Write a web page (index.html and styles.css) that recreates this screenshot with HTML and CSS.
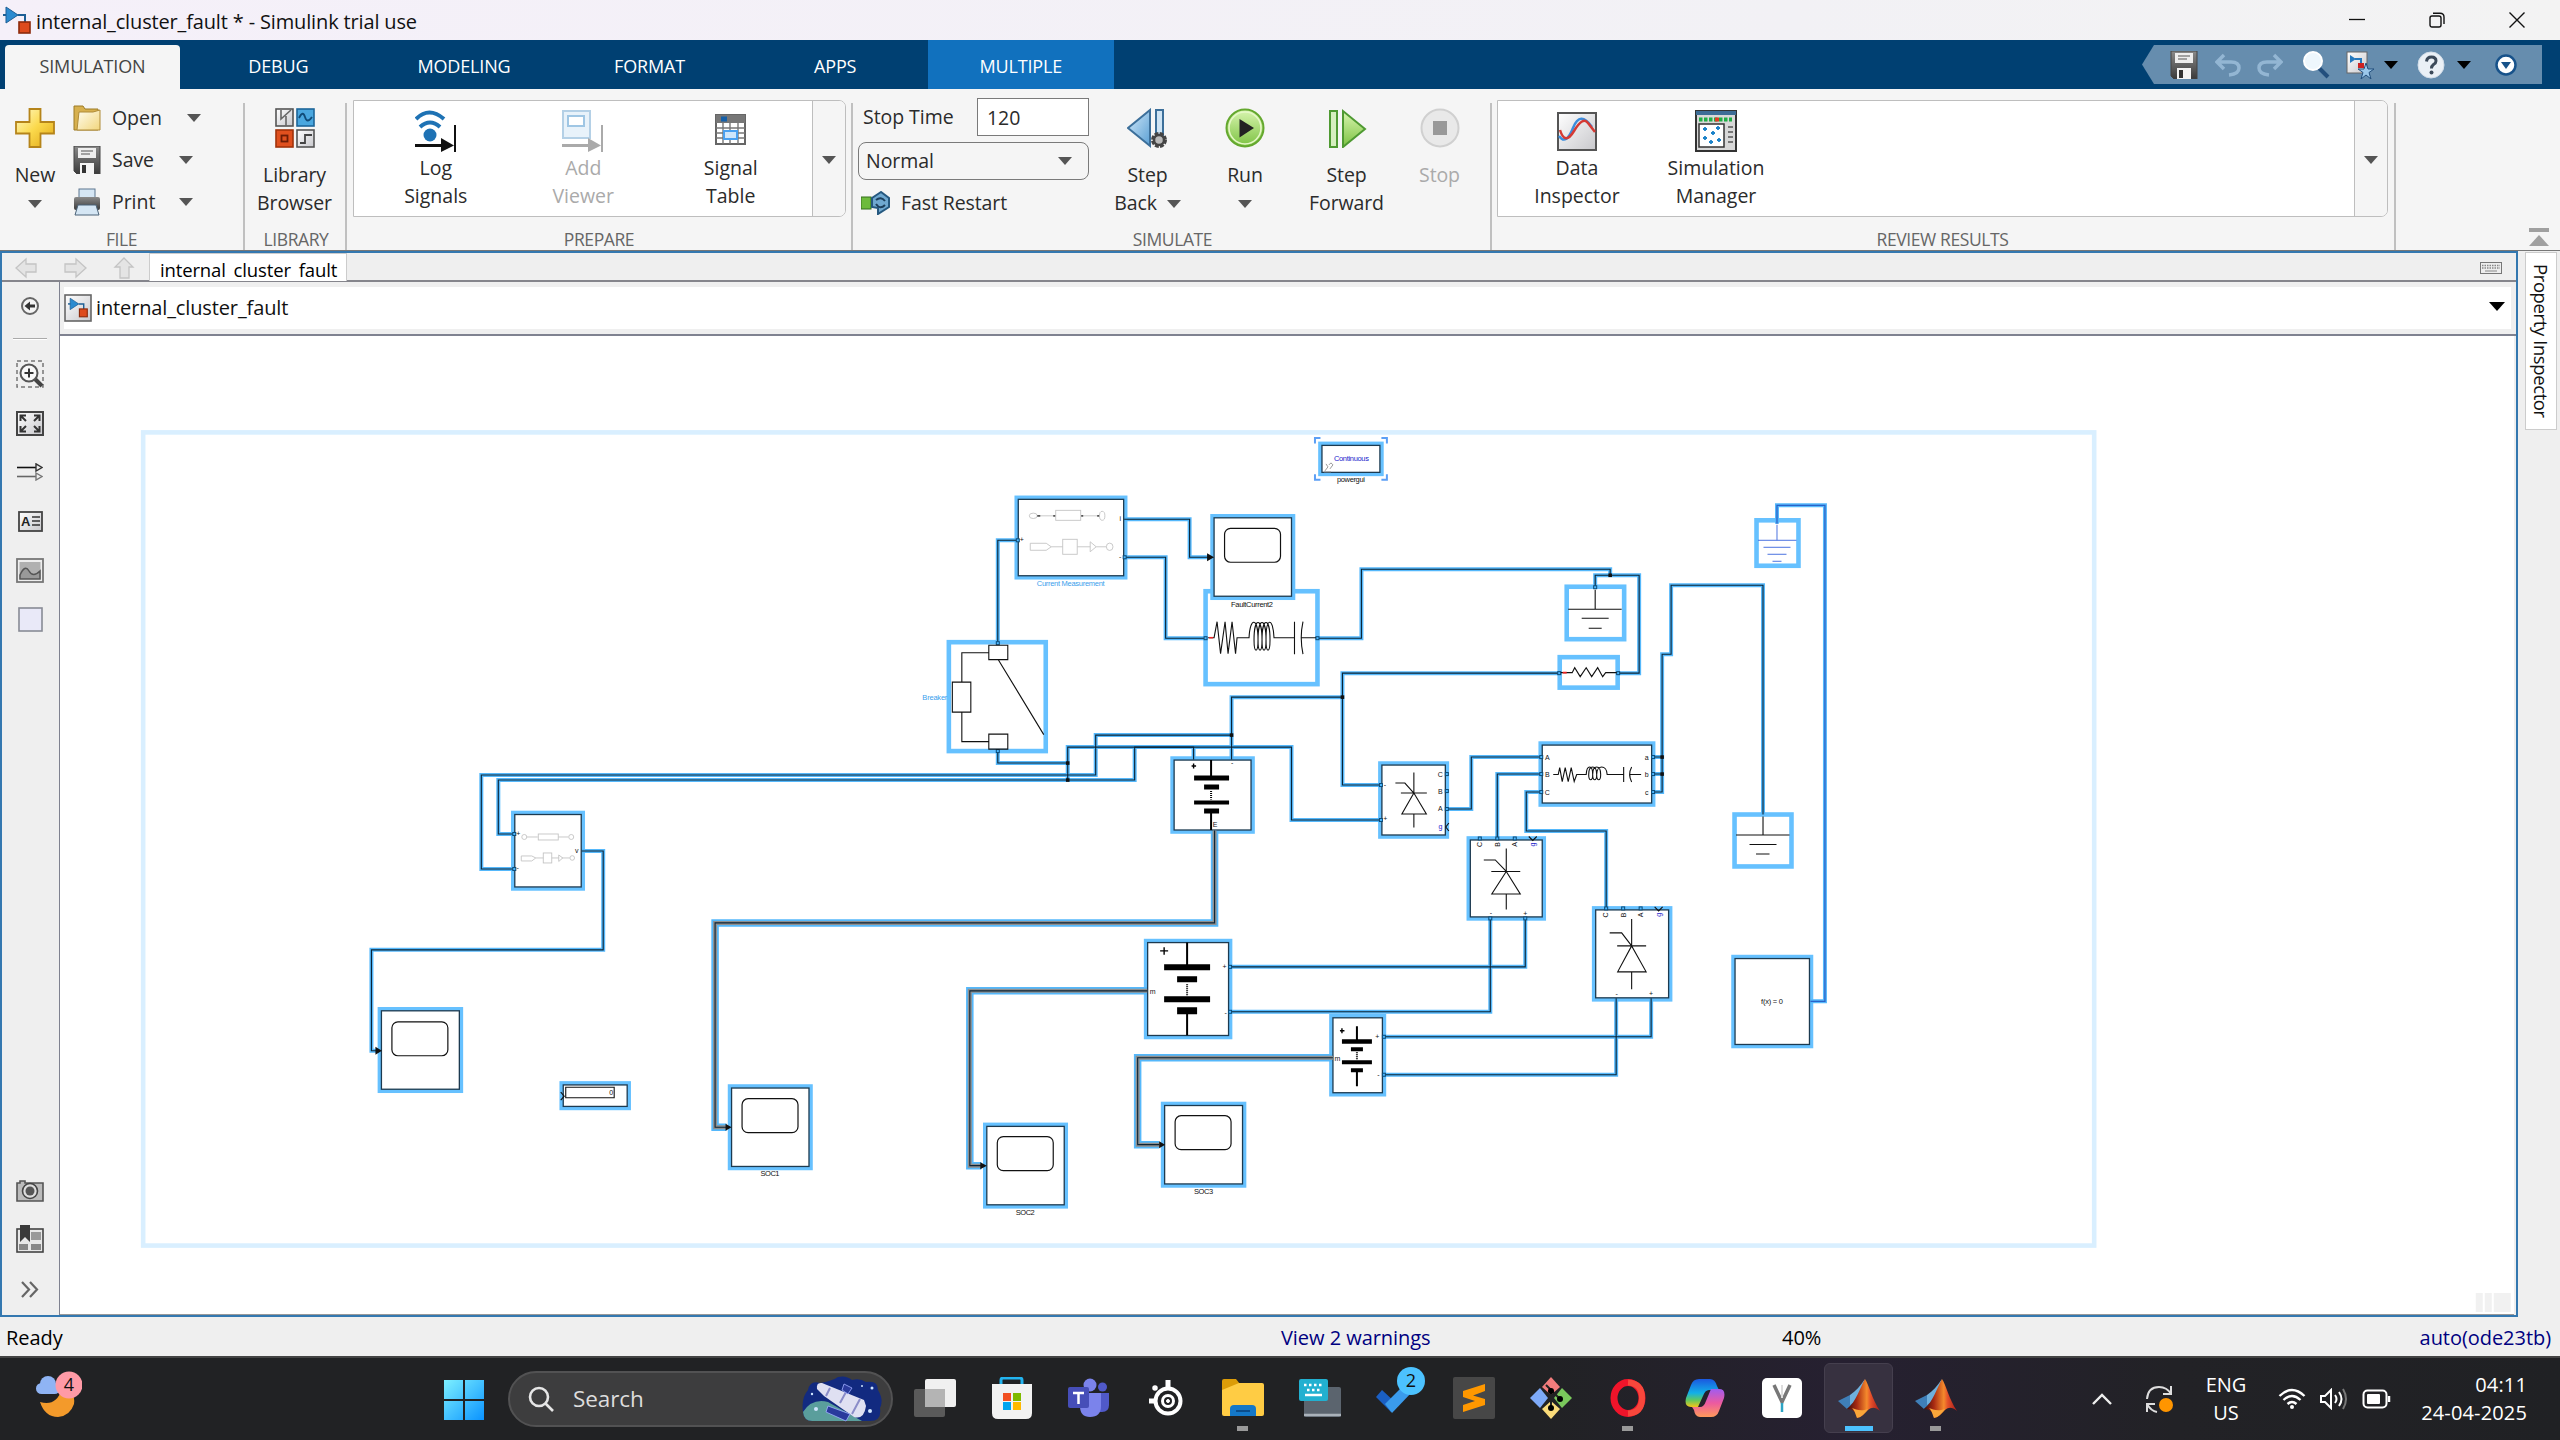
FILE: index.html
```
<!DOCTYPE html>
<html lang="en">
<head>
<meta charset="utf-8">
<title>internal_cluster_fault * - Simulink trial use</title>
<link rel="stylesheet" href="styles.css">
</head>
<body>
<svg class="defs" width="0" height="0">
  <defs>
    <linearGradient id="gold" x1="0" y1="0" x2="1" y2="1"><stop offset="0" stop-color="#fffbd0"/><stop offset=".5" stop-color="#fbd94c"/><stop offset="1" stop-color="#dfa514"/></linearGradient>
    <linearGradient id="manila" x1="0" y1="0" x2="1" y2="1"><stop offset="0" stop-color="#fffdf0"/><stop offset="1" stop-color="#f2d67c"/></linearGradient>
    <linearGradient id="dark" x1="0" y1="0" x2="0" y2="1"><stop offset="0" stop-color="#8a8a8a"/><stop offset="1" stop-color="#3a3a3a"/></linearGradient>
    <linearGradient id="pale" x1="0" y1="0" x2="1" y2="1"><stop offset="0" stop-color="#fff"/><stop offset="1" stop-color="#c8c8cc"/></linearGradient>
    <linearGradient id="sky" x1="0" y1="0" x2="1" y2="1"><stop offset="0" stop-color="#d4eafa"/><stop offset="1" stop-color="#5a9fd4"/></linearGradient>
    <linearGradient id="lime" x1="0" y1="0" x2="0" y2="1"><stop offset="0" stop-color="#d9f5b0"/><stop offset="1" stop-color="#7cc242"/></linearGradient>
    <linearGradient id="win" x1="0" y1="0" x2="1" y2="1"><stop offset="0" stop-color="#7df0ff"/><stop offset="1" stop-color="#0a93ff"/></linearGradient>
    <linearGradient id="flame" x1="0" y1="0" x2="1" y2="0"><stop offset="0" stop-color="#3b0d0a"/><stop offset=".3" stop-color="#a82a12"/><stop offset=".6" stop-color="#f58a2c"/><stop offset=".72" stop-color="#e4502a"/><stop offset="1" stop-color="#a31919"/></linearGradient>
    <linearGradient id="cop1" x1="0" y1="0" x2="0" y2="1"><stop offset="0" stop-color="#1b58e0"/><stop offset=".5" stop-color="#12b0e8"/><stop offset=".75" stop-color="#5fc860"/><stop offset="1" stop-color="#f5c518"/></linearGradient>
    <linearGradient id="cop2" x1="0" y1="0" x2="0" y2="1"><stop offset="0" stop-color="#a05cf0"/><stop offset=".5" stop-color="#ec5aa0"/><stop offset="1" stop-color="#ff9a5a"/></linearGradient>
    <symbol id="floppy" viewBox="0 0 28 28"><path d="M1 0H27V28H4L1 25Z" fill="url(#dark)" stroke="#444"/><rect x="5" y="2" width="18" height="10" fill="#eee"/><path d="M8 5H20M8 8H17" stroke="#888" stroke-width="1.5"/><rect x="7" y="17" width="14" height="11" fill="#f4f4f4"/><rect x="9" y="19" width="4" height="8" fill="#333"/></symbol>
    <symbol id="slk" viewBox="0 0 28 28"><path d="M0 9H14" stroke="#1d5f95" stroke-width="2"/><path d="M3 1L15 9L3 17Z" fill="#2b8bd0" stroke="#1d5f95"/><path d="M15 9H22V17" fill="none" stroke="#1d5f95" stroke-width="2"/><rect x="16" y="16" width="11" height="11" fill="#dd4a1c" stroke="#8d2a0c" stroke-width="1.6"/></symbol>
    <symbol id="matlab" viewBox="0 0 42 40"><path d="M0 23L12 17L20 21L9 31Z" fill="#3f7fb8"/><path d="M12 17C18 13 22 8 27 1L20 21L12 27Z" fill="#6fb0dc"/><path d="M27 1C31 7 34 21 42 33C37 29 34 29 30 32C26 36 24 39 19 40C18 34 15 31 9 31C18 24 22 10 27 1Z" fill="url(#flame)"/><path d="M19 40C17 35 17 33 14 30C18 31 22 34 30 31C26 36 24 39 19 40Z" fill="#f9a63a"/></symbol>
    <symbol id="scope" viewBox="0 0 78 79"><rect x="10.5" y="11" width="56" height="34" rx="6" fill="#fff" stroke="#111" stroke-width="1.2"/></symbol>
  </defs>
</svg>

<header class="titlebar">
  <svg class="app" width="28" height="28"><use href="#slk"/></svg>
  <h1>internal_cluster_fault * - Simulink trial use</h1>
  <div class="winbtns">
    <svg width="16" height="16"><path d="M0 7.5H16" stroke="#111" stroke-width="1.3"/></svg>
    <svg width="16" height="16" fill="none" stroke="#111" stroke-width="1.4"><rect x="1" y="4" width="11" height="11" rx="2"/><path d="M4 1.2H11Q15 1.2 15 5V12"/></svg>
    <svg width="16" height="16"><path d="M.5 .5L15.500 15.500M15.500 .5L.5 15.500" stroke="#111" stroke-width="1.4"/></svg>
  </div>
</header>

<nav class="tabs">
  <span class="tab on">SIMULATION</span><span class="tab">DEBUG</span><span class="tab">MODELING</span><span class="tab">FORMAT</span><span class="tab">APPS</span><span class="tab multi">MULTIPLE</span>
  <div class="quick">
    <svg width="28" height="28"><use href="#floppy"/></svg>
    <svg class="q2" width="26" height="24" fill="none" stroke="#93b6d3" stroke-width="3.500"><path d="M3 9H16Q24 9 24 15Q24 21 14 22M9 2L2 9L9 16"/></svg>
    <svg class="q3" width="26" height="24" fill="none" stroke="#93b6d3" stroke-width="3.500"><path d="M23 9H10Q2 9 2 15Q2 21 12 22M17 2L24 9L17 16"/></svg>
    <svg class="q4" width="28" height="28"><path d="M17 17L26 26" stroke="#234f7d" stroke-width="4"/><circle cx="11" cy="10" r="9" fill="#eef7fd" stroke="#fff" stroke-width="2"/></svg>
    <svg class="q5" width="28" height="28"><rect x="1" y="1" width="20" height="21" fill="url(#pale)" stroke="#666"/><path d="M4 4L10 8L4 12Z" fill="#2478bd"/><path d="M9 8H15V13" stroke="#2478bd" stroke-width="2" fill="none"/><rect x="12" y="12" width="6" height="5" fill="#c22"/><path d="M20 12L22 18H28L23 21.500L25 28L20 24L15 28L17 21.500L12 18H18Z" fill="#9cc8ea" stroke="#234f7d"/></svg>
    <i class="arr blk"></i>
    <svg class="q6" width="28" height="28"><circle cx="14" cy="14" r="13" fill="#eaf0f6" stroke="#d2dde8"/><path d="M9.500 10.500Q10 6 14.500 6Q19 6 19 10Q19 12 16.500 13.500Q14.500 15 14.500 17.500" fill="none" stroke="#3c4a5a" stroke-width="3"/><circle cx="14.500" cy="21.500" r="2" fill="#3c4a5a"/></svg>
    <i class="arr blk"></i>
    <svg class="q7" width="22" height="22"><circle cx="11" cy="11" r="9.500" fill="#fff" stroke="#17528a" stroke-width="2.500"/><path d="M6 8H16L11 15Z" fill="#17528a"/></svg>
  </div>
</nav>

<section class="ribbon">
  <div class="group g-file">
    <div class="body">
      <div class="tool w-new">
        <svg width="40" height="40"><path d="M14.500 1H25.500V14H39V25.500H25.500V39H14.500V25.500H1V14H14.500Z" fill="url(#gold)" stroke="#b5841a" stroke-width="1.8"/></svg>
        <p>New</p><p><i class="arr"></i></p>
      </div>
      <div class="rows">
        <div class="row"><svg width="28" height="26"><path d="M1 1H10L12 4H25V25H1Z" fill="#d7b04e" stroke="#9c7a24"/><path d="M6 7H20L27 5V25H4Z" fill="url(#manila)" stroke="#b08c38"/></svg><span class="wide">Open</span><i class="arr"></i></div>
        <div class="row"><svg width="28" height="28"><use href="#floppy"/></svg><span>Save</span><i class="arr"></i></div>
        <div class="row"><svg width="28" height="28"><rect x="6" y="1" width="16" height="10" fill="#d5e6f4" stroke="#5c7690"/><rect x="1" y="9" width="26" height="13" rx="2" fill="url(#dark)"/><path d="M5 17H23L26 27H2Z" fill="#d5e6f4" stroke="#4b6378"/></svg><span>Print</span><i class="arr"></i></div>
      </div>
    </div>
    <footer>FILE</footer>
  </div>
  <div class="group g-lib">
    <div class="body">
      <div class="tool w-lib">
        <svg width="40" height="40"><rect x="1" y="1" width="17" height="17" fill="url(#pale)" stroke="#555" stroke-width="1.6"/><path d="M6 2V11L16 2M11 18V8" stroke="#666" stroke-width="1.6" fill="none"/><rect x="22" y="1" width="17" height="17" fill="#4aa7df" stroke="#1d6699" stroke-width="1.6"/><path d="M24 10Q28 2 30 9T37 9" stroke="#114b78" stroke-width="1.8" fill="none"/><rect x="1" y="22" width="17" height="17" fill="#e0501e" stroke="#a1320b" stroke-width="1.6"/><rect x="6.500" y="27.500" width="6" height="6" fill="none" stroke="#6d1c05" stroke-width="1.800"/><rect x="22" y="22" width="17" height="17" fill="url(#pale)" stroke="#555" stroke-width="1.6"/><path d="M25 35H30V27H37" stroke="#444" stroke-width="1.8" fill="none"/></svg>
        <p>Library</p><p>Browser</p>
      </div>
    </div>
    <footer>LIBRARY</footer>
  </div>
  <div class="group g-prep">
    <div class="body">
      <div class="gallery gal1">
        <div class="items">
          <div class="item"><svg width="42" height="42"><g fill="none" stroke="#1e72b4" stroke-width="4"><path d="M1 9Q14 -4 29 9"/><path d="M5 17Q15 8 25 17"/></g><circle cx="15" cy="25" r="6.500" fill="#1e72b4"/><path d="M0 35.500H30" stroke="#111" stroke-width="3"/><path d="M26 28L39 35.500L26 42Z" fill="#111"/><path d="M40 15V42" stroke="#111" stroke-width="2"/></svg><p>Log</p><p>Signals</p></div>
          <div class="item off"><svg width="42" height="42"><rect x="1" y="1" width="27" height="27" fill="#e8f2fa" stroke="#b4d0e6" stroke-width="2"/><rect x="6" y="6" width="16" height="10" fill="#fff" stroke="#9fc6e4" stroke-width="2"/><path d="M0 35.500H30" stroke="#aaa" stroke-width="3"/><path d="M26 28L39 35.500L26 42Z" fill="#aaa"/><path d="M40 15V42" stroke="#aaa" stroke-width="2"/></svg><p>Add</p><p>Viewer</p></div>
          <div class="item"><svg width="42" height="42"><rect x="6" y="5" width="29" height="29" fill="#fff" stroke="#666" stroke-width="2"/><rect x="6" y="5" width="29" height="8" fill="#777"/><rect x="11" y="6.500" width="6" height="5" fill="#1660a8"/><path d="M6 18H35M6 23H35M6 28H35M13 13V34M20 13V34M28 13V34" stroke="#777" stroke-width="1.4"/><rect x="14" y="21" width="13" height="8" fill="#cfe6fb" stroke="#4aa0f0" stroke-width="2"/></svg><p>Signal</p><p>Table</p></div>
        </div>
        <div class="more"><i class="arr"></i></div>
      </div>
    </div>
    <footer>PREPARE</footer>
  </div>
  <div class="group g-sim">
    <div class="body">
      <div class="form">
        <div class="stop"><label>Stop Time</label><div class="input">120</div></div>
        <div class="select"><span>Normal</span><i class="arr"></i></div>
        <div class="fast"><svg width="30" height="24"><rect x="0" y="6" width="10" height="12" fill="#6dbb3c" stroke="#356f1c"/><path d="M20 1L11 7V16L17 17V23L28 16V7Z" fill="#6fa8d0" stroke="#25587f" stroke-width="2"/><path d="M15 9Q20 5 24 10M24 14Q19 19 15 13" stroke="#1c3f5c" stroke-width="2" fill="none"/></svg><span>Fast Restart</span></div>
      </div>
      <div class="tool w-back"><svg width="42" height="42"><path d="M23 2V38L1 20Z" fill="url(#sky)" stroke="#3c6f9a" stroke-width="2"/><rect x="29" y="2" width="7" height="26" fill="#cfe4f4" stroke="#3c6f9a" stroke-width="2"/><circle cx="32" cy="32" r="6" fill="#aaa" stroke="#444" stroke-width="4" stroke-dasharray="3.500 1.200"/><circle cx="32" cy="32" r="5" fill="#bbb" stroke="#444" stroke-width="2.500"/></svg><p>Step</p><p>Back <i class="arr"></i></p></div>
      <div class="tool w-run"><svg width="40" height="40"><circle cx="20" cy="20" r="18.500" fill="url(#lime)" stroke="#64a82e" stroke-width="2"/><circle cx="20" cy="20" r="16" fill="none" stroke="#e6f8c8" stroke-width="1.500"/><path d="M14.500 11L29 20L14.500 29.500Z" fill="#222"/></svg><p>Run</p><p><i class="arr"></i></p></div>
      <div class="tool w-fwd"><svg width="40" height="40"><rect x="3" y="3" width="7" height="36" fill="#d6efbf" stroke="#4f9a32" stroke-width="2"/><path d="M16 3V39L38 21Z" fill="url(#lime)" stroke="#4f9a32" stroke-width="2"/></svg><p>Step</p><p>Forward</p></div>
      <div class="tool w-stop off"><svg width="40" height="40"><circle cx="20" cy="20" r="18.500" fill="#e9e9e9" stroke="#d0d0d0" stroke-width="2"/><rect x="13" y="13" width="14" height="14" fill="#999"/></svg><p>Stop</p></div>
    </div>
    <footer>SIMULATE</footer>
  </div>
  <div class="group g-rev">
    <div class="body">
      <div class="gallery gal2">
        <div class="items">
          <div class="item"><svg width="42" height="42"><rect x="2" y="3" width="38" height="37" fill="url(#pale)" stroke="#555" stroke-width="2"/><path d="M3 26Q10 36 17 18T36 17" fill="none" stroke="#3c8ddc" stroke-width="2.500"/><path d="M4 20Q9 36 18 21T32 13L39 22" fill="none" stroke="#d43a34" stroke-width="2.500"/></svg><p>Data</p><p>Inspector</p></div>
          <div class="item"><svg width="42" height="42"><rect x="1" y="1" width="40" height="40" fill="#d8d8d8" stroke="#333" stroke-width="2"/><rect x="1" y="1" width="40" height="4" fill="#3d6d96"/><path d="M4 9.500H37" stroke="#1fae45" stroke-width="4" stroke-dasharray="3.500 1.500"/><rect x="20" y="7.500" width="4" height="4" fill="#e23b25"/><rect x="4" y="14" width="25" height="23" fill="#fff" stroke="#333" stroke-width="1.500"/><path d="M8 19H12M10 17V21M16 23H20M18 21V25M21 18H25M23 16V20M8 28H12M10 26V30M14 32H18M16 30V34M22 30H26M24 28V32" stroke="#1b82c9" stroke-width="1.800"/><path d="M33 17H38M33 22H38M33 27H38M33 32H38" stroke="#555" stroke-width="1.600"/></svg><p>Simulation</p><p>Manager</p></div>
        </div>
        <div class="more"><i class="arr"></i></div>
      </div>
    </div>
    <footer>REVIEW RESULTS</footer>
  </div>
  <svg class="collapse" width="20" height="20"><rect width="20" height="4" x="0" y="1" fill="#a0a0a0"/><path d="M10 8L20 19H0Z" fill="#a0a0a0"/></svg>
</section>

<main class="work">
  <div class="editor">
    <div class="docbar">
      <svg class="nav" width="147" height="26" fill="#e4e4e4" stroke="#c4c4c4" stroke-width="1.300"><path d="M14 15L24 6V11H34V19H24V24Z"/><path d="M84 15L74 6V11H63V19H74V24Z"/><path d="M122 5L131 14H127V25H118V14H113Z"/></svg>
      <div class="doctab"><span>internal_cluster_fault</span></div>
      <svg class="kbd" width="22" height="12"><rect x=".5" y=".5" width="21" height="11" fill="#eee" stroke="#777"/><path d="M2 3.500H20M2 6H20" stroke="#888" stroke-width="1.300" stroke-dasharray="1.500 1"/><path d="M5 9H17" stroke="#888"/></svg>
    </div>
    <div class="panes">
      <aside class="strip">
        <div class="icons">
          <svg width="18" height="18"><circle cx="9" cy="9" r="8" fill="#f4f4f4" stroke="#666" stroke-width="2"/><path d="M3.500 9L9 4.500V7.500H14V10.500H9V13.500Z" fill="#333"/></svg>
          <hr>
          <svg class="i1" width="28" height="28"><rect x="1" y="1" width="26" height="26" fill="none" stroke="#777" stroke-width="1.500" stroke-dasharray="4 3"/><path d="M18 18L26 26" stroke="#444" stroke-width="4"/><circle cx="13" cy="13" r="8.500" fill="#f8f8f8" stroke="#555" stroke-width="2"/><path d="M8.500 13H17.500M13 8.500V17.500" stroke="#333" stroke-width="2"/></svg>
          <svg class="i2" width="28" height="25"><rect x="1" y="1" width="26" height="23" fill="url(#pale)" stroke="#444" stroke-width="2"/><path d="M4.500 10V4.500H10M4.500 4.500L10 10M23.500 10V4.500H18M23.500 4.500L18 10M4.500 15V20.500H10M4.500 20.500L10 15M23.500 15V20.500H18M23.500 20.500L18 15" fill="none" stroke="#333" stroke-width="2"/></svg>
          <svg class="i3" width="26" height="18"><path d="M0 4.500H22" stroke="#111" stroke-width="1.600"/><path d="M0 13.500H22" stroke="#666" stroke-width="1.600"/><path d="M19 .8L25 4.500L19 8Z" fill="#eee" stroke="#333" stroke-width="1.400"/><path d="M19 10L25 13.500L19 17Z" fill="#eee" stroke="#777" stroke-width="1.400"/></svg>
          <svg class="i4" width="25" height="21"><rect x="1" y="1" width="23" height="19" fill="url(#pale)" stroke="#444" stroke-width="1.800"/><text x="3" y="14.500" class="ico-a">A</text><path d="M14 6H22M14 10H22M14 14H22" stroke="#333" stroke-width="1.300"/></svg>
          <svg class="i5" width="28" height="25"><rect x="1" y="1" width="26" height="23" fill="#eee" stroke="#777" stroke-width="1.800"/><rect x="3.500" y="4" width="21" height="17" fill="#b0b0b0"/><path d="M4 17Q9 6 13 13T24 13V21H4Z" fill="#999" stroke="#555" stroke-width="1.500"/></svg>
          <svg class="i6" width="25" height="25"><rect x="1" y="1" width="23" height="23" fill="#e9e9f8" stroke="#888b95" stroke-width="1.600"/></svg>
          <svg class="i7" width="28" height="23"><path d="M1 4H4V2H9V4H27V22H1Z" fill="#bbb" stroke="#555" stroke-width="1.600"/><circle cx="14" cy="12" r="7.500" fill="#ddd" stroke="#444" stroke-width="1.600"/><circle cx="14" cy="12" r="4.500" fill="#555"/></svg>
          <svg class="i8" width="28" height="28"><rect x="1" y="4" width="26" height="23" fill="#e8e8e8" stroke="#444" stroke-width="1.600"/><rect x="3" y="19" width="9" height="6" fill="#888"/><rect x="15" y="19" width="10" height="6" fill="#888"/><rect x="15" y="7" width="10" height="8" fill="#999"/><path d="M4 0H14V17L9 12L4 17Z" fill="#3a3a3a"/></svg>
          <svg class="i9" width="18" height="17" fill="none" stroke="#666" stroke-width="2.200"><path d="M1 1L8 8.500L1 16M9 1L16 8.500L9 16"/></svg>
        </div>
      </aside>
      <div class="content">
        <div class="crumb">
          <div class="path"><svg width="28" height="28"><rect x="1" y="1" width="26" height="26" fill="url(#pale)" stroke="#666" stroke-width="1.600"/><svg x="4" y="3" width="20" height="21"><use href="#slk"/></svg></svg><span>internal_cluster_fault</span><i class="arr big blk"></i></div>
        </div>
        <svg class="canvas" width="2454" height="979" viewBox="60 336 2454 979">
          <defs>
            <g id="blocks">
              <rect x="1322" y="445.500" width="58" height="27"/>
              <rect x="1018" y="499.500" width="105.500" height="76.500"/>
              <rect x="1214" y="518" width="77.500" height="78.500"/>
              <rect x="1174" y="760.500" width="77" height="70"/>
              <rect x="1382" y="765.500" width="63.500" height="70"/>
              <rect x="1147.500" y="943.200" width="81" height="93"/>
              <rect x="1333" y="1018.500" width="49.500" height="75"/>
              <rect x="1164.500" y="1106.300" width="78" height="78.500"/>
              <rect x="380.500" y="1011.500" width="78" height="78.500"/>
              <rect x="731" y="1088.800" width="77.500" height="78.500"/>
              <rect x="986.500" y="1127.200" width="77.500" height="78.500"/>
              <rect x="562.500" y="1085.700" width="64" height="21.500"/>
              <rect x="514" y="815" width="66.500" height="72.500"/>
              <rect x="1470.500" y="840.500" width="72" height="77"/>
              <rect x="1596" y="910.500" width="73" height="88"/>
              <rect x="1542.500" y="745.500" width="109.500" height="58"/>
              <rect x="1735.500" y="959.200" width="74.500" height="86"/>
            </g>
            <g id="wires">
              <path d="M1017 540.500H997.500V642"/>
              <path d="M1124 519.500H1189.500V557.500H1208"/>
              <path d="M1124 557.500H1165.500V638.500H1205"/>
              <path d="M1317.500 638.500H1361.500V569.500H1610.500V575.500"/>
              <path d="M1595.500 588V575.500H1639.500V673.500H1618"/>
              <path d="M1559 673.500H1342.500V785.500H1381"/>
              <path d="M1342.500 697.500H1231.500V760"/>
              <path d="M1231.500 735.500H1095.500V775.500H480.500V869.500H514"/>
              <path d="M997.500 751V763.500H1067.500"/>
              <path d="M1067.500 780.500V747.500H1291.500V820.500H1381"/>
              <path d="M514 834.500H497.500V780.500H1134.500V747.500H1193.500V760"/>
              <path d="M581 851.500H602.500V950.500H370.500V1051.500H376"/>
              <path d="M1446 809.500H1471.500V757.500H1542"/>
              <path d="M1497.500 840V774.500H1542"/>
              <path d="M1542 792.500H1526.500V831.500H1606.500V910"/>
              <path d="M1652 792.500H1662.500V654.500H1671.500V585.500H1763.500V815"/>
              <path d="M1652 757.500H1662.500M1652 774.500H1662.500"/>
              <path d="M1229 967.500H1525.500V918"/>
              <path d="M1229 1012.500H1490.500V918"/>
              <path d="M1383 1037.500H1651.500V999"/>
              <path d="M1383 1075.500H1616.500V999"/>
            </g>
            <g id="busses">
              <path d="M1214.500 831V923.500H714.500V1128H726"/>
              <path d="M1147 991.500H969.500V1166.500H981"/>
              <path d="M1333 1058.500H1137.500V1145.500H1159"/>
            </g>
            <path id="sheet-gnd" d="M1777.500 524V505.500H1825.500V1002H1811"/>
          </defs>
          <rect x="142" y="432.500" width="1953" height="814" fill="none" stroke="#d9efff" stroke-width="4.600"/>
          <g class="selbox">
            <rect x="1205.500" y="591.500" width="112" height="93"/>
            <rect x="948.500" y="642.500" width="97" height="109"/>
            <rect x="1567" y="587" width="57.500" height="52.500"/>
            <rect x="1560" y="657.500" width="58" height="30.500"/>
            <rect x="1735" y="815" width="57" height="52"/>
            <rect x="1757" y="520.500" width="42" height="45.500"/>
          </g>
          <use href="#blocks" class="halo-block"/>
          <use href="#wires" class="halo-wire"/>
          <use href="#sheet-gnd" class="halo-wire"/>
          <use href="#busses" class="halo-bus"/>
          <use href="#blocks" class="core-block"/>
          <use href="#wires" class="core-wire"/>
          <use href="#sheet-gnd" class="core-phys"/>
          <use href="#busses" class="grey-bus"/>
          <use href="#busses" class="core-wire"/>

          <g fill="#111">
            <path d="M1207 553.500L1214 557.500L1207 561.500Z"/><path d="M374.500 1047.500L381 1051.500L374.500 1055.500Z"/><path d="M725 1124.500L731 1128L725 1131.500Z"/><path d="M980 1163L986.500 1166.500L980 1170Z"/><path d="M1159 1142L1165 1145.500L1159 1149Z"/>
            <rect x="1608.700" y="573.700" width="3.600" height="3.600"/><rect x="1340.700" y="695.700" width="3.600" height="3.600"/><rect x="1229.700" y="733.700" width="3.600" height="3.600"/><rect x="1065.700" y="761.700" width="3.600" height="3.600"/><rect x="1065.700" y="778.700" width="3.600" height="3.600"/><rect x="1660.700" y="755.700" width="3.600" height="3.600"/><rect x="1660.700" y="772.700" width="3.600" height="3.600"/>
          </g>
          <g fill="#4db8ff" stroke="#0a4b78" stroke-width="1">
            <rect x="1016" y="539" width="3" height="3"/><rect x="1123" y="556" width="3" height="3"/><rect x="1204" y="637" width="3" height="3"/><rect x="1316" y="637" width="3" height="3"/><rect x="996" y="642" width="3" height="3"/><rect x="996" y="750" width="3" height="3"/><rect x="1558" y="672" width="3" height="3"/><rect x="1617" y="672" width="3" height="3"/><rect x="1594" y="586" width="3" height="3"/>
            <rect x="1379.500" y="784" width="3" height="3"/><rect x="1379.500" y="819" width="3" height="3"/><rect x="1445.500" y="773" width="3" height="3"/><rect x="1445.500" y="790" width="3" height="3"/><rect x="1445.500" y="808" width="3" height="3"/>
            <rect x="1478.500" y="837.500" width="3" height="3"/><rect x="1496" y="837.500" width="3" height="3"/><rect x="1513.500" y="837.500" width="3" height="3"/><rect x="1605" y="907.500" width="3" height="3"/><rect x="1622" y="907.500" width="3" height="3"/><rect x="1639.500" y="907.500" width="3" height="3"/>
            <rect x="1540" y="756" width="3" height="3"/><rect x="1540" y="773" width="3" height="3"/><rect x="1540" y="791" width="3" height="3"/><rect x="1652" y="756" width="3" height="3"/><rect x="1652" y="773" width="3" height="3"/><rect x="1652" y="791" width="3" height="3"/>
            <rect x="1228.500" y="966" width="3" height="3"/><rect x="1228.500" y="1011" width="3" height="3"/><rect x="1382.500" y="1036" width="3" height="3"/><rect x="1382.500" y="1074" width="3" height="3"/><rect x="1489" y="917.500" width="3" height="3"/><rect x="1524" y="917.500" width="3" height="3"/><rect x="512" y="833" width="3" height="3"/><rect x="512" y="868" width="3" height="3"/>
          </g>

          <use href="#scope" x="1214" y="517.500" width="78" height="79"/>
          <use href="#scope" x="1164.500" y="1105.500" width="78" height="79"/>
          <use href="#scope" x="380.500" y="1011.500" width="78" height="79"/>
          <use href="#scope" x="731" y="1088.500" width="78" height="79"/>
          <use href="#scope" x="986.500" y="1126.500" width="78" height="79"/>
          <path d="M565 1088H613.500V1098.500H565ZM560 1093L563.500 1097L560 1101" class="ln"/>

          <!-- powergui selection brackets and broken-link badge -->
          <path d="M1315 443.500V438H1320.500M1381.500 438H1387V443.500M1387 474.500V480H1381.500M1320.500 480H1315V474.500" fill="none" stroke="#5c9ff5" stroke-width="2"/>
          <path d="M1325 471L1328 467L1326 464M1329 465L1331 463L1333 465L1330 469M1324 472L1331 472" fill="none" stroke="#999" stroke-width="1"/>

          <!-- current and voltage measurement masks -->
          <g class="faint">
            <ellipse cx="1033" cy="516" rx="4" ry="2.700"/><path d="M1037 516H1055M1081 516H1098"/><rect x="1055.500" y="510.500" width="25" height="10"/><ellipse cx="1102" cy="516" rx="2.700" ry="4.500"/>
            <path d="M1030 543.500H1046L1051 547L1046 550.500H1030ZM1051 547H1062.500M1077 547H1090M1096 547H1106M1090 542L1096 547L1090 552Z"/><rect x="1062.500" y="539.500" width="14.500" height="15"/><ellipse cx="1109.500" cy="547" rx="3.300" ry="3.700"/>
            <circle cx="523.500" cy="837.500" r="2.500"/><path d="M526 837.500H537M557.500 837.500H567.500"/><rect x="537.500" y="834.500" width="20" height="6"/><circle cx="570.500" cy="837.500" r="2.500"/>
            <path d="M520.500 856.500H531L535 858.500L531 861.500H520.500ZM535 858.500H542.500M551 858.500H558M561 858.500H569M558 855.500L562 858.500L558 862Z"/><rect x="542.500" y="853.500" width="8.500" height="10"/><circle cx="571.500" cy="858.500" r="2.300"/>
          </g>
          <path d="M1037 516H1040M1053 516H1055M1081 516H1083M1097 516H1099" stroke="#555" stroke-width="1.800"/>

          <!-- series RLC branch -->
          <path class="ln" d="M1208 638H1214L1217 622L1220.500 654L1225 622L1228 654L1232 622L1235.500 654L1237 638H1249C1250 617 1258 617 1258 640C1258 654 1254 654 1254 640C1254 617 1262 617 1262 640C1262 654 1258 654 1258 640C1258 617 1266 617 1266 640C1266 654 1262 654 1262 640C1262 617 1270 617 1270 640C1270 654 1266 654 1266 640C1266 617 1273 617 1274 638H1294.500M1294.500 622V654.500M1303 622Q1299.500 638 1303 654.500M1301 638H1316"/>
          <path d="M1209 638H1213" stroke="#e22" stroke-width="1.500"/>

          <!-- breaker -->
          <path class="ln" d="M988.500 645.500H1007.500V660H988.500ZM988.500 734.500H1007.500V749.500H988.500ZM952 682.500H970.500V712.500H952ZM988.500 653H961.500V682.500M961.500 712.500V742H988.500M998 660L1043.500 735"/>

          <!-- resistor -->
          <path class="ln" d="M1561 673H1572.500L1575 668L1580.500 677L1586.500 668L1592 677L1598 668L1603 677L1606 673H1617"/>
          <path d="M1563 673H1567" stroke="#e22" stroke-width="1.800"/>

          <!-- grounds -->
          <path class="ln" d="M1595.500 590V609.500M1568.500 609.500H1622M1582 618.500H1609M1589 628.500H1602M1763.500 817V835.500M1736.500 835.500H1790M1750 845H1777M1756.500 854.500H1770"/>
          <path d="M1777.500 525V540.500M1758.500 540.500H1797M1764 547.500H1791M1768 554.500H1787M1773 561.500H1782" fill="none" stroke="#4a72e0" stroke-width="1"/>

          <!-- three-phase RLC -->
          <path class="ln" d="M1553.500 775H1558.500L1560 768L1562.500 782L1565.500 768L1568.500 782L1571.500 768L1574.500 782L1577 775H1586.500C1587 765 1593 765 1593 775C1593 782 1589 782 1589 775C1589 765 1597 765 1597 775C1597 782 1593 782 1593 775C1593 765 1601 765 1601 775C1601 782 1597 782 1597 775C1597 765 1607 765 1607.500 775H1624M1624 767.500V782.500M1632 767.500Q1628 775 1632 782.500M1630 775H1641.500"/>

          <!-- thyristors -->
          <g class="ln">
            <path d="M1414 773V793.500M1401 793.500H1427M1414 793.500L1402 814.500H1426.500ZM1414 814.500V828M1395.500 783.500H1405L1414 793.500"/>
            <path d="M1506.500 849V872M1491.500 872H1520.500M1506.500 872L1492 894.500H1520.500ZM1506.500 894.500V910M1484 860.500H1495.500L1506.500 872"/>
            <path d="M1632 919.500V946.500M1617.500 946.500H1646.500M1632 946.500L1618 972.500H1646.500ZM1632 972.500V990M1610 933.500H1622L1632 946.500"/>
            <path d="M1449 823.500L1446 827.500L1449 831.500M1529 837L1533 841L1537 837M1655 907.500L1659 911.500L1663 907.500"/>
          </g>

          <!-- batteries -->
          <path fill="#000" d="M1210 760.500H1212V776H1229V781H1194V776H1210ZM1204 785H1219V790H1204ZM1194 801H1229V805H1194ZM1204 809H1219V814H1212V830.500H1210V814H1204Z"/>
          <path fill="#000" d="M1186 943H1188V965H1210V971H1164V965H1186ZM1177 977H1197V983H1177ZM1164 997H1210V1003H1164ZM1177 1008H1197V1015H1188V1036H1186V1015H1177Z"/>
          <path fill="#000" d="M1356 1027H1358V1040H1372V1044.500H1342V1040H1356ZM1351 1048H1363V1052H1351ZM1342 1061H1372V1065H1342ZM1351 1069H1363V1073H1358V1087H1356V1073H1351Z"/>
          <path d="M1211 791.500V800M1187 985V996M1357 1053V1060" stroke="#000" stroke-width="2" stroke-dasharray="1 1"/>
          <path d="M1191.500 766.500H1196M1193.500 764V769M1160 951.500H1168M1164 948V955.500M1340 1031.500H1344.500M1342 1029V1034" stroke="#000" stroke-width="1.400"/>

          <g class="lbl">
            <text x="1351.500" y="461.500" class="navy" textLength="35">Continuous</text><text x="1351" y="482.500" textLength="28">powergui</text>
            <text x="1070.500" y="586" class="sky" textLength="68">Current Measurement</text><text x="1252" y="607" textLength="42">FaultCurrent2</text>
            <text x="934.500" y="700.500" class="sky" textLength="25">Breaker</text>
            <text x="1203.500" y="1194.500" textLength="19">SOC3</text><text x="769.500" y="1177" textLength="19">SOC1</text><text x="1025" y="1216" textLength="19">SOC2</text>
            <text x="1772.500" y="1004.500" textLength="22">f(x) = 0</text>
          </g>
          <g class="port">
            <text x="1120" y="521.500">i</text><text x="1120" y="559.500">-</text><text x="1021.500" y="542">+</text>
            <text x="610.500" y="1096">0</text><text x="517.500" y="836.500">+</text><text x="517" y="871">-</text><text x="576" y="854">v</text>
            <text x="1232" y="765">-</text><text x="1215" y="828">E</text>
            <text x="1440.500" y="777">C</text><text x="1440.500" y="794">B</text><text x="1440.500" y="812">A</text><text x="1440.500" y="829.500" class="navy">g</text>
            <text x="1385" y="787.500">-</text><text x="1385.500" y="822">+</text>
            <text x="1152.500" y="994.500">m</text><text x="1224.500" y="969.500">+</text><text x="1225.500" y="1015.500">-</text>
            <text x="1337.500" y="1061.500">m</text><text x="1377.500" y="1040">+</text><text x="1378.500" y="1078">-</text>
            <text x="1547.500" y="760">A</text><text x="1547.500" y="777">B</text><text x="1547.500" y="795">C</text>
            <text x="1647" y="760">a</text><text x="1647" y="777">b</text><text x="1647" y="795">c</text>
            <text transform="translate(1482.500 845) rotate(-90)">C</text><text transform="translate(1500 845) rotate(-90)">B</text><text transform="translate(1517.500 845) rotate(-90)">A</text><text transform="translate(1535 845) rotate(-90)" class="navy">g</text>
            <text transform="translate(1608.500 915.500) rotate(-90)">C</text><text transform="translate(1626 915.500) rotate(-90)">B</text><text transform="translate(1643.500 915.500) rotate(-90)">A</text><text transform="translate(1661 915.500) rotate(-90)" class="navy">g</text>
            <text x="1491" y="916">-</text><text x="1525.500" y="916.500">+</text><text x="1617" y="997">-</text><text x="1651.500" y="997">+</text>
          </g>
          <g fill="#f1f1f1"><rect x="2477" y="1294" width="7" height="19"/><rect x="2486" y="1294" width="7" height="19"/><rect x="2495" y="1294" width="17" height="19"/></g>
        </svg>
      </div>
    </div>
  </div>
  <aside class="inspector"><span>Property Inspector</span></aside>
</main>

<div class="status"><span>Ready</span><a class="warn">View 2 warnings</a><span class="zoom">40%</span><a class="solver">auto(ode23tb)</a></div>

<footer class="taskbar">
  <svg class="weather" width="48" height="48"><g fill="#8fb4f4"><circle cx="14" cy="13" r="8"/><rect x="2" y="12" width="24" height="11" rx="5.500"/></g><path d="M6 31Q22 36 28 18Q42 20 40 33Q36 45 24 46Q11 46 6 31Z" fill="#f39a2b"/><circle cx="35" cy="14" r="13.500" fill="#ff9aa6"/><text x="35" y="20">4</text></svg>
  <svg class="start" width="40" height="41"><path d="M0 1H19V20H0ZM21 1H40V20H21ZM0 22H19V41H0ZM21 22H40V41H21Z" fill="url(#win)"/></svg>
  <div class="search"><svg width="26" height="26" fill="none" stroke="#e6e6e6" stroke-width="2.600"><circle cx="11" cy="11" r="9"/><path d="M17.500 17.500L25 25"/></svg><span>Search</span>
    <svg class="art" width="80" height="46" viewBox="0 0 80 46"><path d="M1 36Q-1 22 6 14Q8 4 18 7Q30 5 36 1Q44 -1 50 4Q58 2 64 6Q76 4 76 14Q82 24 78 32Q80 45 68 45H12Q2 46 1 36Z" fill="#122a80"/><path d="M1 36Q10 22 26 26L60 45H12Q2 46 1 36Z" fill="#5a9e9c"/><path d="M20 7Q14 6 15 13L22 20L52 41Q62 44 64 30L62 24Z" fill="#dfe0f2"/><path d="M28 12L24 20M44 16L38 27M58 23L50 38" stroke="#8a8cc8" stroke-width="2"/><path d="M26 30L48 38L44 45L24 36ZM42 8L50 12L46 18L40 14Z" fill="#2a3a9c" stroke="#9fb0ff" stroke-width=".8"/><g fill="#cfe6ff"><circle cx="10" cy="18" r="1.200"/><circle cx="70" cy="12" r="1.500"/><circle cx="68" cy="35" r="2"/><circle cx="14" cy="33" r="2"/><circle cx="60" cy="10" r="1"/></g></svg>
  </div>
  <div class="apps">
    <div class="cell"><svg width="42" height="40"><rect x="0" y="11" width="31" height="28" rx="2" fill="#5a5a5a"/><rect x="11" y="1" width="31" height="28" rx="2" fill="#f0f0f0"/><rect x="11" y="11" width="20" height="18" fill="#b4b4b4"/></svg></div>
    <div class="cell"><svg width="42" height="42"><path d="M10 10V3Q10 1 12 1H29Q31 1 31 3V10" fill="none" stroke="#22b4f0" stroke-width="3"/><path d="M1 7H41V36Q41 42 35 42H7Q1 42 1 36Z" fill="#f2f2f2"/><rect x="12" y="16" width="8" height="8" fill="#f25022"/><rect x="22" y="16" width="8" height="8" fill="#7fba00"/><rect x="12" y="25" width="8" height="8" fill="#00a4ef"/><rect x="22" y="25" width="8" height="8" fill="#ffb900"/></svg></div>
    <div class="cell"><svg width="42" height="40"><circle cx="22" cy="7" r="6.500" fill="#7b83eb"/><circle cx="34.500" cy="9" r="4.500" fill="#5059c9"/><path d="M28 15H41V27Q41 34 34 34H28Z" fill="#5059c9"/><path d="M12 15H33V28Q33 39 22 39Q12 39 12 28Z" fill="#7b83eb"/><rect x="0" y="9" width="21" height="21" rx="2" fill="#464eb8"/><path d="M5 15H16M10.500 15V26" stroke="#fff" stroke-width="2.500"/></svg></div>
    <div class="cell"><svg width="36" height="38" fill="none" stroke="#fff"><circle cx="20" cy="22" r="12.500" stroke-width="4"/><circle cx="20" cy="22" r="5.500" stroke-width="3"/><circle cx="20" cy="22" r="1.500" fill="#fff"/><path d="M20 1V10M1 22H8" stroke-width="5"/><circle cx="7" cy="9" r="2" stroke-width="1.500" fill="#fff"/></svg></div>
    <div class="cell run"><svg width="42" height="40"><path d="M0 3Q0 1 2 1H14L18 6V12H0Z" fill="#dc9c08"/><path d="M0 12L17 5H40Q42 5 42 7V36Q42 38 40 38H2Q0 38 0 36Z" fill="#ffcc44"/><path d="M8 38V31Q8 27 12 27H30Q34 27 34 31V38Z" fill="#1478c8"/><path d="M14 33H28" stroke="#0a4d8c" stroke-width="2"/></svg></div>
    <div class="cell"><svg width="42" height="40"><rect x="5" y="9" width="37" height="30" rx="2" fill="#5b646e"/><path d="M5 37H42" stroke="#aab2ba" stroke-width="2.500"/><rect x="0" y="1" width="29" height="22" rx="2" fill="#22b0d0"/><path d="M5 7H24M8 12H21" stroke="#fff" stroke-width="2.500" stroke-dasharray="2.500 2.500"/><path d="M6 17H23" stroke="#fff" stroke-width="2.500"/></svg></div>
    <div class="cell"><svg class="todo" width="52" height="50"><path d="M8 24L2 31L17 46L22 37Z" fill="#1a5fc4"/><path d="M32 17L38 26L18 47L11 38Z" fill="#3a9bec"/><circle cx="37" cy="15" r="14" fill="#4cc2ff"/><text x="37" y="21">2</text></svg></div>
    <div class="cell"><svg width="42" height="42"><rect width="42" height="42" rx="2" fill="#474747"/><path d="M10 14L32 7V14L20 18.500L32 22V28L10 35V28L22 24L10 20Z" fill="#ff9800"/></svg></div>
    <div class="cell"><svg width="42" height="42"><path d="M21 0L30 10L21 18L12 10Z" fill="#f27c7c"/><path d="M32 11L42 21L32 31L24 21Z" fill="#7ac95c"/><path d="M10 11L18 21L10 31L0 21Z" fill="#7eaaf8"/><path d="M21 24L30 32L21 42L12 32Z" fill="#fbdc7a"/><path d="M16 8L30 22M21 15V31" stroke="#222" stroke-width="2"/><circle cx="21" cy="31" r="3"/><circle cx="30" cy="22" r="3"/><circle cx="21" cy="14" r="3"/></svg></div>
    <div class="cell run"><svg width="38" height="38"><ellipse cx="19" cy="19" rx="14" ry="15.500" fill="none" stroke="#f0142a" stroke-width="7"/><path d="M19 3.500Q33 4 33 19T19 34.500" fill="none" stroke="#f8473c" stroke-width="6"/></svg></div>
    <div class="cell"><svg width="40" height="40"><path d="M14 1H25Q30 1 32 8L34 12H24Q20 12 18 18L13 29H6Q-1 29 1 20L6 7Q8 1 14 1Z" fill="url(#cop1)"/><path d="M26 39H15Q10 39 9 32L7 29H15Q19 29 21 23L26 11H34Q41 11 39 20L34 33Q32 39 26 39Z" fill="url(#cop2)"/></svg></div>
    <div class="cell"><svg width="40" height="40"><rect width="40" height="40" rx="5" fill="#fff"/><path d="M12 7L20 24L28 7" fill="none" stroke="#777" stroke-width="3.500"/><path d="M20 7V20" stroke="#ddd" stroke-width="2"/><path d="M20 25V34" stroke="#2da4c4" stroke-width="2.500"/></svg></div>
    <div class="cell active"><svg width="42" height="40"><use href="#matlab"/></svg></div>
    <div class="cell run"><svg width="42" height="40"><use href="#matlab"/></svg></div>
  </div>
  <div class="tray">
    <svg class="up" width="20" height="12"><path d="M1 11L10 2L19 11" fill="none" stroke="#eee" stroke-width="2.400"/></svg>
    <svg class="sync" width="30" height="30" fill="none" stroke="#ddd" stroke-width="2"><path d="M2 15Q3 3 14 3Q22 3 26 10M26 2V10H18M2 28V20H10M2 20Q6 27 12 28"/><circle cx="21" cy="21" r="7" fill="#ff9500" stroke="none"/></svg>
    <div class="lang">ENG<br>US</div>
    <svg class="wifi" width="28" height="22" fill="none" stroke="#fff" stroke-width="2.400"><path d="M1.500 8Q14 -4 26.500 8M5.500 12Q14 4 22.500 12M9.500 16Q14 12 18.500 16"/><circle cx="14" cy="19" r="2" fill="#fff" stroke="none"/></svg>
    <svg class="vol" width="30" height="22" fill="none" stroke="#fff" stroke-width="2"><path d="M2 8H6L12 2V20L6 14H2ZM16 7Q19 11 16 15M20 4Q25 11 20 18"/><path d="M24 1Q30 11 24 21" stroke="#777"/></svg>
    <svg class="bat" width="30" height="20"><rect x="1.500" y="1.500" width="23" height="17" rx="4" fill="none" stroke="#fff" stroke-width="2"/><rect x="5" y="5" width="13" height="10" rx="1" fill="#fff"/><path d="M27 7V13" stroke="#fff" stroke-width="2.500"/></svg>
    <div class="clock">04:11<br>24-04-2025</div>
  </div>
</footer>
</body>
</html>
```
FILE: styles.css
```
* { box-sizing: border-box; }
body {
  margin: 0; width: 2560px; height: 1440px; overflow: hidden;
  display: flex; flex-direction: column;
  font: 19.500px/28px "Open Sans", "Noto Sans", sans-serif; color: #2b2b2b; background: #efefef;
}
svg { display: block; flex: none; }
p { margin: 0; }
.defs { position: absolute; }

.arr { display: inline-block; width: 0; height: 0; border: 7px solid transparent; border-top: 8px solid #555; border-bottom: 0; flex: none; }
.arr.blk { border-top-color: #000; }
.arr.big { border-left-width: 8px; border-right-width: 8px; border-top-width: 9px; }

.titlebar { height: 40px; flex: none; display: flex; align-items: center; background: linear-gradient(90deg, #f5f0f9, #f2f1f5 70%, #f3f3f3); padding: 0 35px 0 3px; }
.titlebar h1 { margin: 3px 0 0 5px; font-size: 20px; font-weight: 400; color: #111; letter-spacing: -.15px; }
.winbtns { margin-left: auto; display: flex; gap: 64px; }
.winbtns svg { overflow: visible; }

.tabs { height: 49px; flex: none; display: flex; background: #004072; }
.tab { width: 185.600px; line-height: 53px; text-align: center; color: #fff; font-size: 18px; letter-spacing: -.15px; }
.tab.on { width: 175px; margin: 5px 5.600px 0 5px; background: #f5f5f5; color: #444; border-radius: 4px 4px 0 0; line-height: 43px; }
.tab.multi { background: #1171be; }
.quick { margin: 5px 18px 5px auto; width: 400px; padding-left: 28px; display: flex; align-items: center; background: #668dae; clip-path: polygon(12px 0, 100% 0, 100% 100%, 12px 100%, 0 50%); }
.q2 { margin-left: 17px; } .q3 { margin-left: 16px; } .q4 { margin-left: 19px; } .q5 { margin-left: 16px; margin-right: 10px; }
.q6 { margin: 0 12px 0 19px; } .q7 { margin-left: 24px; }

.ribbon { height: 162px; flex: none; display: flex; background: #f5f5f5; border-bottom: 1px solid #777; }
.group { display: flex; flex-direction: column; height: 161px; background: linear-gradient(#c0c0c0, #c0c0c0) right bottom / 2px 147px no-repeat; }
.group .body { flex: 1; display: flex; }
.group footer { height: 22px; line-height: 22px; text-align: center; font-size: 17.500px; color: #666; letter-spacing: -.4px; }
.g-file { width: 245px; } .g-lib { width: 102px; } .g-prep { width: 506px; } .g-sim { width: 639px; } .g-rev { width: 904px; }
.g-file footer, .g-prep footer { padding-right: 2px; }
.g-rev footer { padding-right: 3px; }
.tool { display: flex; flex-direction: column; align-items: center; padding-top: 19px; letter-spacing: -.1px; }
.tool svg { margin-bottom: 13px; }
.tool p { height: 28px; display: flex; align-items: center; gap: 10px; }
.tool .arr, .more .arr { margin-top: 2px; }
.off { color: #aaa; }
.w-new { width: 70px; } .w-lib { width: 99px; } .w-back { width: 92px; margin-left: 12.500px; } .w-run { width: 103px; } .w-fwd { width: 100px; } .w-stop { width: 86px; }
.w-back svg { margin-bottom: 11px; }
.rows { padding: 8px 0 0 3px; }
.row { height: 42px; display: flex; align-items: center; letter-spacing: -.05px; }
.row span { width: 67px; margin-left: 11px; } .row .wide { width: 75px; }
.gallery { margin: 11px 0 0 6px; height: 117px; display: flex; background: #fff; border: 1.500px solid #bebebe; border-radius: 0 7px 7px 0; overflow: hidden; }
.gal1 { width: 493px; } .gal2 { width: 891px; margin-left: 5px; }
.items { flex: 1; display: flex; padding: 9px 0 0 8px; }
.item { width: 147.500px; display: flex; flex-direction: column; align-items: center; letter-spacing: 0; }
.gal2 .item { width: 139px; } .gal2 .items { padding-left: 9.500px; }
.item svg { margin-bottom: 2px; }
.more { width: 33px; background: #f5f5f5; border-left: 1.500px solid #bebebe; display: flex; align-items: center; justify-content: center; }
.form { width: 231px; margin-left: 5px; padding-top: 9px; letter-spacing: -.05px; }
.stop { display: flex; justify-content: space-between; align-items: center; padding-left: 5px; }
.input { width: 112px; height: 38px; line-height: 38px; padding-left: 9px; background: #fff; border: 1.500px solid #7a7a7a; }
.select { height: 38px; margin-top: 6px; padding: 0 16px 0 7px; border: 1.500px solid #7a7a7a; border-radius: 8px; display: flex; align-items: center; justify-content: space-between; }
.fast { height: 44px; display: flex; align-items: center; gap: 10px; padding: 2px 0 0 3px; letter-spacing: -.1px; }
.collapse { margin: 138px 0 0 133px; }

.work { height: 1066px; flex: none; display: flex; }
.editor { width: 2518px; border: 2px solid #3478b0; display: flex; flex-direction: column; }
.docbar { height: 29px; flex: none; display: flex; background: #efefef; border-bottom: 2px solid #85858c; }
.doctab { width: 198px; height: 28px; margin-bottom: -1px; background: #fff; border: 1px solid #ccc; border-bottom: 0; padding-left: 10px; }
.doctab span { display: block; height: 24px; overflow: hidden; line-height: 31px; font-size: 18.500px; letter-spacing: -.15px; color: #000; }
.kbd { margin: 9px 14px 0 auto; }
.panes { flex: 1; display: flex; }
.strip { width: 58px; background: #efefef; border-right: 1.500px solid #7f8290; }
.icons { display: flex; flex-direction: column; align-items: center; padding: 15px 1px 0 0; }
.icons hr { width: 34px; height: 2px; margin: 23px 0 0; border: 0; background: #aaa; border-bottom: 1px solid #fff; }
.i1 { margin-top: 20px; } .i2 { margin-top: 23px; } .i3 { margin-top: 27px; } .i4 { margin-top: 30px; } .i5 { margin-top: 26px; } .i6 { margin-top: 24px; } .i7 { margin-top: 547px; } .i8 { margin-top: 23px; } .i9 { margin-top: 28px; }
.ico-a { font: bold 13px "Liberation Sans", sans-serif; fill: #222; }
.content { flex: 1; }
.crumb { height: 54px; padding: 5px 5px 0 4px; background: #efefef; border-bottom: 2px solid #7f8290; }
.path { height: 42px; background: #fff; display: flex; align-items: center; color: #111; font-size: 20px; letter-spacing: -.13px; }
.path span { margin-left: 4px; } .path .arr { margin: -4px 6px 0 auto; }
.canvas { background: #fff; border-bottom: 1px solid #999; }

.selbox { fill: none; stroke: #66c1ff; stroke-width: 4.600px; }
.halo-block { fill: none; stroke: #66c1ff; stroke-width: 7.600px; }
.core-block { fill: #fff; stroke: #1c3a50; stroke-width: 1.300px; }
.halo-wire { fill: none; stroke: #55b8fb; stroke-width: 4px; }
.halo-bus { fill: none; stroke: #55b8fb; stroke-width: 7.500px; }
.grey-bus { fill: none; stroke: #8f8f8f; stroke-width: 4px; }
.core-wire { fill: none; stroke: #0c2436; stroke-width: 1.100px; }
.core-phys { fill: none; stroke: #2a62c8; stroke-width: 1.300px; }
.ln { fill: none; stroke: #111; stroke-width: 1.100px; }
.faint { fill: none; stroke: #c4c4c4; stroke-width: .9px; }
.lbl { font: 7.500px "Liberation Sans", Arial, sans-serif; text-anchor: middle; fill: #111; }
.port { font: 7px "Liberation Sans", Arial, sans-serif; text-anchor: middle; fill: #111; }
.lbl .navy, .port .navy { fill: #2222cc; } .lbl .sky { fill: #3aa0ec; }

.inspector { width: 32px; height: 178px; margin: 1px 0 0 7px; background: #fff; border: 1px solid #ccc; display: flex; justify-content: center; }
.inspector span { writing-mode: vertical-rl; font-size: 18.500px; letter-spacing: -.4px; color: #111; padding-top: 11px; line-height: 30px; white-space: nowrap; }

.status { height: 39px; flex: none; display: flex; align-items: center; padding: 2px 9px 0 6px; background: #efefef; color: #000; font-size: 20px; letter-spacing: -.05px; }
.status a { color: #000080; }
.status > span:first-child { width: 1275px; } .warn { width: 501px; } .solver { margin-left: auto; }

.taskbar { height: 84px; flex: none; display: flex; align-items: center; background: linear-gradient(90deg, #212224, #212224 60%, #262031 72%, #222226 85%, #202124); border-top: 2px solid #444; color: #fff; font-size: 20px; }
.weather { margin: 0 0 9px 34px; } .weather text, .todo text { font-size: 18px; fill: #111; text-anchor: middle; }
.start { margin-left: 362px; }
.search { margin: 0 3px 0 24px; width: 385px; height: 56px; border-radius: 28px; background: #3d3d3e; border: 2px solid #525253; display: flex; align-items: center; padding-left: 18px; font-size: 22.500px; letter-spacing: -.1px; color: #ddd; }
.search span { margin-left: 19px; } .art { margin-left: auto; margin-right: 9px; }
.apps { display: flex; height: 82px; }
.cell { width: 77px; height: 70px; margin-top: 5px; display: flex; align-items: center; justify-content: center; padding-bottom: 1px; }
.todo { margin: -14px 0 0 6px; }
.run, .active { background: radial-gradient(#999, #999) center 63px / 11px 5px no-repeat; }
.active { width: 69px; margin-left: 4px; margin-right: 4px; border-radius: 6px; background: radial-gradient(#4cc2ff, #4cc2ff) center 62px / 28px 5px no-repeat, #373140; border: 1px solid #453f4e; }
.tray { flex: 1; display: flex; align-items: center; padding-right: 33px; }
.up { margin-left: 118px; } .sync { margin-left: 33px; }
.lang { width: 70px; margin-left: 16px; text-align: center; } .wifi { margin-left: 17px; } .vol { margin-left: 13px; } .bat { margin-left: 13px; }
.clock { margin-left: auto; text-align: right; letter-spacing: .15px; }
```
